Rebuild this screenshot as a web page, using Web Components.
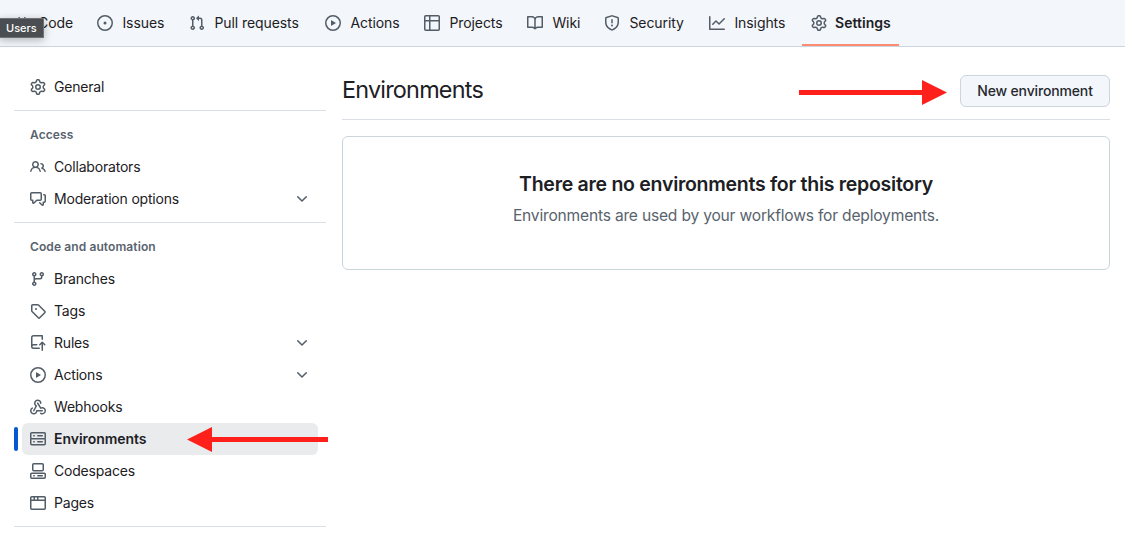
<!DOCTYPE html>
<html lang="en">
<head>
<meta charset="utf-8">
<title>Environments</title>
<style>
body{margin:0;background:#fff;color:#1c2024;font:14px/20px Inter,"Liberation Sans",sans-serif;height:533px;overflow:hidden}
</style>
</head>
<body>
<settings-page></settings-page>
<script>
const ICONS={
code:'m11.28 3.22 4.25 4.25a.75.75 0 0 1 0 1.06l-4.25 4.25a.75.75 0 0 1-1.06-1.06L13.94 8l-3.72-3.72a.75.75 0 0 1 1.06-1.06Zm-6.56 0a.75.75 0 0 1 1.06 1.06L2.06 8l3.72 3.72a.75.75 0 0 1-1.06 1.06L.47 8.53a.75.75 0 0 1 0-1.06Z',
issue:'M8 9.5a1.5 1.5 0 1 0 0-3 1.5 1.5 0 0 0 0 3ZM8 0a8 8 0 1 1 0 16A8 8 0 0 1 8 0ZM1.5 8a6.5 6.5 0 1 0 13 0 6.5 6.5 0 0 0-13 0Z',
pull:'M1.5 3.25a2.25 2.25 0 1 1 3 2.122v5.256a2.251 2.251 0 1 1-1.5 0V5.372A2.25 2.25 0 0 1 1.5 3.25Zm5.677-.177L9.573.677A.25.25 0 0 1 10 .854V2.5h1A2.5 2.5 0 0 1 13.5 5v5.628a2.251 2.251 0 1 1-1.5 0V5a1 1 0 0 0-1-1h-1v1.646a.25.25 0 0 1-.427.177L7.177 3.427a.25.25 0 0 1 0-.354ZM3.75 2.5a.75.75 0 1 0 0 1.5.75.75 0 0 0 0-1.5Zm0 9.5a.75.75 0 1 0 0 1.5.75.75 0 0 0 0-1.5Zm8.25.75a.75.75 0 1 0 1.5 0 .75.75 0 0 0-1.5 0Z',
play:'M8 0a8 8 0 1 1 0 16A8 8 0 0 1 8 0ZM1.5 8a6.5 6.5 0 1 0 13 0 6.5 6.5 0 0 0-13 0Zm4.879-2.773 4.264 2.559a.25.25 0 0 1 0 .428l-4.264 2.559A.25.25 0 0 1 6 10.559V5.442a.25.25 0 0 1 .379-.215Z',
table:'M0 1.75C0 .784.784 0 1.75 0h12.5C15.216 0 16 .784 16 1.75v12.5A1.75 1.75 0 0 1 14.25 16H1.75A1.75 1.75 0 0 1 0 14.25ZM6.5 6.5v8h7.75a.25.25 0 0 0 .25-.25V6.5Zm8-1.5V1.75a.25.25 0 0 0-.25-.25H6.5V5Zm-13 1.5v7.75c0 .138.112.25.25.25H5v-8ZM5 5V1.5H1.75a.25.25 0 0 0-.25.25V5Z',
book:'M0 1.75A.75.75 0 0 1 .75 1h4.253c1.227 0 2.317.59 3 1.501A3.743 3.743 0 0 1 11.006 1h4.245a.75.75 0 0 1 .75.75v10.5a.75.75 0 0 1-.75.75h-4.507a2.25 2.25 0 0 0-1.591.659l-.622.621a.75.75 0 0 1-1.06 0l-.622-.621A2.25 2.25 0 0 0 5.258 13H.75a.75.75 0 0 1-.75-.75Zm7.251 10.324.004-5.073-.002-2.253A2.25 2.25 0 0 0 5.003 2.5H1.5v9h3.757a3.75 3.75 0 0 1 1.994.574ZM8.755 4.75l-.004 7.322a3.752 3.752 0 0 1 1.992-.572H14.5v-9h-3.495a2.25 2.25 0 0 0-2.25 2.25Z',
shield:'M7.467.133a1.748 1.748 0 0 1 1.066 0l5.25 1.68A1.75 1.75 0 0 1 15 3.48V7c0 1.566-.32 3.182-1.303 4.682-.983 1.498-2.585 2.813-5.032 3.855a1.697 1.697 0 0 1-1.33 0c-2.447-1.042-4.049-2.357-5.032-3.855C1.32 10.182 1 8.566 1 7V3.48a1.75 1.75 0 0 1 1.217-1.667Zm.61 1.429a.25.25 0 0 0-.153 0l-5.25 1.68a.25.25 0 0 0-.174.238V7c0 1.358.275 2.666 1.057 3.86.784 1.194 2.121 2.34 4.366 3.297a.196.196 0 0 0 .154 0c2.245-.956 3.582-2.104 4.366-3.298C13.225 9.666 13.5 8.36 13.5 7V3.48a.251.251 0 0 0-.174-.237l-5.25-1.68ZM8.75 4.75v3a.75.75 0 0 1-1.5 0v-3a.75.75 0 0 1 1.5 0ZM9 10.5a1 1 0 1 1-2 0 1 1 0 0 1 2 0Z',
graph:'M1.5 1.75V13.5h13.75a.75.75 0 0 1 0 1.5H.75a.75.75 0 0 1-.75-.75V1.75a.75.75 0 0 1 1.5 0Zm14.28 2.53-5.25 5.25a.75.75 0 0 1-1.06 0L7 7.06 4.28 9.78a.751.751 0 0 1-1.042-.018.751.751 0 0 1-.018-1.042l3.25-3.25a.75.75 0 0 1 1.06 0L10 7.94l4.72-4.72a.751.751 0 0 1 1.042.018.751.751 0 0 1 .018 1.042Z',
gear:'M8 0a8.2 8.2 0 0 1 .701.031C9.444.095 9.99.645 10.16 1.29l.288 1.107c.018.066.079.158.212.224.231.114.454.243.668.386.123.082.233.09.299.071l1.103-.303c.644-.176 1.392.021 1.82.63.27.385.506.792.704 1.218.315.675.111 1.422-.364 1.891l-.814.806c-.049.048-.098.147-.088.294.016.257.016.515 0 .772-.01.147.038.246.088.294l.814.806c.475.469.679 1.216.364 1.891a7.977 7.977 0 0 1-.704 1.217c-.428.61-1.176.807-1.82.63l-1.102-.302c-.067-.019-.177-.011-.3.071a5.909 5.909 0 0 1-.668.386c-.133.066-.194.158-.211.224l-.29 1.106c-.168.646-.715 1.196-1.458 1.26a8.006 8.006 0 0 1-1.402 0c-.743-.064-1.289-.614-1.458-1.26l-.289-1.106c-.018-.066-.079-.158-.212-.224a5.738 5.738 0 0 1-.668-.386c-.123-.082-.233-.09-.299-.071l-1.103.303c-.644.176-1.392-.021-1.82-.63a8.12 8.12 0 0 1-.704-1.218c-.315-.675-.111-1.422.363-1.891l.815-.806c.05-.048.098-.147.088-.294a6.214 6.214 0 0 1 0-.772c.01-.147-.038-.246-.088-.294l-.815-.806C.635 6.045.431 5.298.746 4.623a7.92 7.92 0 0 1 .704-1.217c.428-.61 1.176-.807 1.82-.63l1.102.302c.067.019.177.011.3-.071.214-.143.437-.272.668-.386.133-.066.194-.158.211-.224l.29-1.106C6.009.645 6.556.095 7.299.03 7.53.01 7.764 0 8 0Zm-.571 1.525c-.036.003-.108.036-.137.146l-.289 1.105c-.147.561-.549.967-.998 1.189-.173.086-.34.183-.5.29-.417.278-.97.423-1.529.27l-1.103-.303c-.109-.03-.175.016-.195.045-.22.312-.412.644-.573.99-.014.031-.021.11.059.19l.815.806c.411.406.562.957.53 1.456a4.709 4.709 0 0 0 0 .582c.032.499-.119 1.05-.53 1.456l-.815.806c-.081.08-.073.159-.059.19.162.346.353.677.573.989.02.03.085.076.195.046l1.102-.303c.56-.153 1.113-.008 1.53.27.161.107.328.204.501.29.447.222.85.629.997 1.189l.289 1.105c.029.109.101.143.137.146a6.6 6.6 0 0 0 1.142 0c.036-.003.108-.036.137-.146l.289-1.105c.147-.561.549-.967.998-1.189.173-.086.34-.183.5-.29.417-.278.97-.423 1.529-.27l1.103.303c.109.029.175-.016.195-.045.22-.313.411-.644.573-.99.014-.031.021-.11-.059-.19l-.815-.806c-.411-.406-.562-.957-.53-1.456a4.709 4.709 0 0 0 0-.582c-.032-.499.119-1.05.53-1.456l.815-.806c.081-.08.073-.159.059-.19a6.464 6.464 0 0 0-.573-.989c-.02-.03-.085-.076-.195-.046l-1.102.303c-.56.153-1.113.008-1.53-.27a4.44 4.44 0 0 0-.501-.29c-.447-.222-.85-.629-.997-1.189l-.289-1.105c-.029-.11-.101-.143-.137-.146a6.6 6.6 0 0 0-1.142 0ZM11 8a3 3 0 1 1-6 0 3 3 0 0 1 6 0ZM9.5 8a1.5 1.5 0 1 0-3.001.001A1.5 1.5 0 0 0 9.5 8Z',
people:'M2 5.5a3.5 3.5 0 1 1 5.898 2.549 5.508 5.508 0 0 1 3.034 4.084.75.75 0 1 1-1.482.235 4 4 0 0 0-7.9 0 .75.75 0 0 1-1.482-.236A5.507 5.507 0 0 1 3.102 8.05 3.493 3.493 0 0 1 2 5.5ZM11 4a3.001 3.001 0 0 1 2.22 5.018 5.01 5.01 0 0 1 2.56 3.012.749.749 0 0 1-.885.954.752.752 0 0 1-.549-.514 3.507 3.507 0 0 0-2.522-2.372.75.75 0 0 1-.574-.73v-.352a.75.75 0 0 1 .416-.672A1.5 1.5 0 0 0 11 5.5.75.75 0 0 1 11 4Zm-5.5-.5a2 2 0 1 0-.001 3.999A2 2 0 0 0 5.5 3.5Z',
discussion:'M1.75 1h8.5c.966 0 1.75.784 1.75 1.75v5.5A1.75 1.75 0 0 1 10.25 10H7.061l-2.574 2.573A1.458 1.458 0 0 1 2 11.543V10h-.25A1.75 1.75 0 0 1 0 8.25v-5.5C0 1.784.784 1 1.75 1ZM1.5 2.75v5.5c0 .138.112.25.25.25h1a.75.75 0 0 1 .75.75v2.19l2.72-2.72a.749.749 0 0 1 .53-.22h3.5a.25.25 0 0 0 .25-.25v-5.5a.25.25 0 0 0-.25-.25h-8.5a.25.25 0 0 0-.25.25Zm13 2a.25.25 0 0 0-.25-.25h-.5a.75.75 0 0 1 0-1.5h.5c.966 0 1.75.784 1.75 1.75v5.5A1.75 1.75 0 0 1 14.25 12H14v1.543a1.458 1.458 0 0 1-2.487 1.03L9.22 12.28a.749.749 0 0 1 .326-1.275.749.749 0 0 1 .734.215l2.22 2.22v-2.19a.75.75 0 0 1 .75-.75h1a.25.25 0 0 0 .25-.25Z',
branch:'M9.5 3.25a2.25 2.25 0 1 1 3 2.122V6A2.5 2.5 0 0 1 10 8.5H6a1 1 0 0 0-1 1v1.128a2.251 2.251 0 1 1-1.5 0V5.372a2.25 2.25 0 1 1 1.5 0v1.836A2.493 2.493 0 0 1 6 7h4a1 1 0 0 0 1-1v-.628A2.25 2.25 0 0 1 9.5 3.25Zm-6 0a.75.75 0 1 0 1.5 0 .75.75 0 0 0-1.5 0Zm8.25-.75a.75.75 0 1 0 0 1.5.75.75 0 0 0 0-1.5ZM4.25 12a.75.75 0 1 0 0 1.5.75.75 0 0 0 0-1.5Z',
tag:'M1 7.775V2.75C1 1.784 1.784 1 2.75 1h5.025c.464 0 .91.184 1.238.513l6.25 6.25a1.75 1.75 0 0 1 0 2.474l-5.026 5.026a1.75 1.75 0 0 1-2.474 0l-6.25-6.25A1.752 1.752 0 0 1 1 7.775Zm1.5 0c0 .066.026.13.073.177l6.25 6.25a.25.25 0 0 0 .354 0l5.025-5.025a.25.25 0 0 0 0-.354l-6.25-6.25a.25.25 0 0 0-.177-.073H2.75a.25.25 0 0 0-.25.25ZM6 5a1 1 0 1 1 0 2 1 1 0 0 1 0-2Z',
push:'M1 2.5A2.5 2.5 0 0 1 3.5 0h8.75a.75.75 0 0 1 .75.75v3.5a.75.75 0 0 1-1.5 0V1.5h-8a1 1 0 0 0-1 1v6.708A2.493 2.493 0 0 1 3.5 9h3.25a.75.75 0 0 1 0 1.5H3.5a1 1 0 0 0 0 2h5.75a.75.75 0 0 1 0 1.5H3.5A2.5 2.5 0 0 1 1 11.5Zm13.23 7.79-1.23-1.224v6.184a.75.75 0 0 1-1.5 0V9.066l-1.22 1.224a.75.75 0 0 1-1.06-1.06l2.5-2.5a.75.75 0 0 1 1.06 0l2.5 2.5a.75.75 0 0 1-1.05 1.06Z',
webhook:'M5.5 4.25a2.25 2.25 0 0 1 4.5 0 .75.75 0 0 0 1.5 0 3.75 3.75 0 1 0-6.14 2.889l-2.272 4.258a.75.75 0 0 0 1.324.706L7 7.25a.75.75 0 0 0-.309-1.015A2.25 2.25 0 0 1 5.5 4.25Z M7.364 3.607a.75.75 0 0 1 1.03.257l2.608 4.349a3.75 3.75 0 1 1-.628 6.785.75.75 0 0 1 .752-1.299 2.25 2.25 0 1 0-.033-3.88.75.75 0 0 1-1.03-.256L7.107 4.636a.75.75 0 0 1 .257-1.03Z M2.9 8.776A.75.75 0 0 1 2.625 9.8 2.25 2.25 0 1 0 6 11.75a.75.75 0 0 1 .75-.751h5.5a.75.75 0 0 1 0 1.5H7.425a3.751 3.751 0 1 1-5.55-3.998.75.75 0 0 1 1.024.274Z',
server:'M1.75 1h12.5c.966 0 1.75.784 1.75 1.75v4c0 .372-.116.717-.314 1 .198.283.314.628.314 1v4a1.75 1.75 0 0 1-1.75 1.75H1.75A1.75 1.75 0 0 1 0 12.75v-4c0-.358.109-.707.314-1a1.739 1.739 0 0 1-.314-1v-4C0 1.784.784 1 1.75 1ZM1.5 2.75v4c0 .138.112.25.25.25h12.5a.25.25 0 0 0 .25-.25v-4a.25.25 0 0 0-.25-.25H1.75a.25.25 0 0 0-.25.25Zm.25 5.75a.25.25 0 0 0-.25.25v4c0 .138.112.25.25.25h12.5a.25.25 0 0 0 .25-.25v-4a.25.25 0 0 0-.25-.25ZM7 4.75A.75.75 0 0 1 7.75 4h4.5a.75.75 0 0 1 0 1.5h-4.5A.75.75 0 0 1 7 4.75ZM7.75 10h4.5a.75.75 0 0 1 0 1.5h-4.5a.75.75 0 0 1 0-1.5ZM3 4.75A.75.75 0 0 1 3.75 4h.5a.75.75 0 0 1 0 1.5h-.5A.75.75 0 0 1 3 4.75ZM3.75 10h.5a.75.75 0 0 1 0 1.5h-.5a.75.75 0 0 1 0-1.5Z',
codespaces:'M0 11.25c0-.966.784-1.75 1.75-1.75h12.5c.966 0 1.75.784 1.75 1.75v3A1.75 1.75 0 0 1 14.25 16H1.75A1.75 1.75 0 0 1 0 14.25Zm2-9.5C2 .784 2.784 0 3.75 0h8.5C13.216 0 14 .784 14 1.75v5a1.75 1.75 0 0 1-1.75 1.75h-8.5A1.75 1.75 0 0 1 2 6.75Zm1.75-.25a.25.25 0 0 0-.25.25v5c0 .138.112.25.25.25h8.5a.25.25 0 0 0 .25-.25v-5a.25.25 0 0 0-.25-.25Zm-2 9.5a.25.25 0 0 0-.25.25v3c0 .138.112.25.25.25h12.5a.25.25 0 0 0 .25-.25v-3a.25.25 0 0 0-.25-.25ZM7 12.75a.75.75 0 0 1 .75-.75h4.5a.75.75 0 0 1 0 1.5h-4.5a.75.75 0 0 1-.75-.75Zm-4 0a.75.75 0 0 1 .75-.75h.5a.75.75 0 0 1 0 1.5h-.5a.75.75 0 0 1-.75-.75Z',
browser:'M0 2.75C0 1.784.784 1 1.75 1h12.5c.966 0 1.75.784 1.75 1.75v10.5A1.75 1.75 0 0 1 14.25 15H1.75A1.75 1.75 0 0 1 0 13.25ZM14.5 6h-13v7.25c0 .138.112.25.25.25h12.5a.25.25 0 0 0 .25-.25Zm-6-3.5v2h6V2.75a.25.25 0 0 0-.25-.25ZM5 2.5v2h2v-2Zm-3.25 0a.25.25 0 0 0-.25.25V4.5h2v-2Z',
chevron:'M12.78 5.22a.749.749 0 0 1 0 1.06l-4.25 4.25a.749.749 0 0 1-1.06 0L3.22 6.28a.749.749 0 1 1 1.06-1.06L8 8.939l3.72-3.719a.749.749 0 0 1 1.06 0Z'
};
function define(name,render){
  customElements.define(name,class extends HTMLElement{
    constructor(){super();this.attachShadow({mode:'open'})}
    connectedCallback(){this.shadowRoot.innerHTML=render(this)}
  });
}
define('oct-icon',el=>`<style>:host{display:block;flex:none;width:16px;height:16px;color:#535d68}svg{display:block}</style>
<svg width="16" height="16" viewBox="0 0 16 16" fill="currentColor"><path fill-rule="${el.getAttribute('name')==='webhook'?'nonzero':'evenodd'}" d="${ICONS[el.getAttribute('name')]}"/></svg>`);

define('nav-tab',el=>`<style>
:host{display:flex;flex:none;box-sizing:border-box;height:46px;align-items:center;gap:8px;padding:0 0 0 8px;white-space:nowrap;position:relative;letter-spacing:-.08px}
:host([current]){font-weight:600;letter-spacing:.04px}
:host([current])::after{content:"";position:absolute;left:-1px;right:0;bottom:0;height:2px;background:#fd8c73}
span{padding-left:1.4px}
:host([current]) span{padding-left:0}
:host([icon=code]) span{padding-left:0}
:host([icon=code]) oct-icon{margin-bottom:2px}
</style><oct-icon name="${el.getAttribute('icon')}"></oct-icon><span><slot></slot></span>`);

define('repo-nav',()=>`<style>
:host{display:flex;height:46px;background:#f3f6fa;border-bottom:1px solid #ccd5de;padding-left:6px}
</style><slot></slot>`);

define('nav-item',el=>`<style>
:host{display:flex;box-sizing:border-box;height:32px;margin:0 8px;padding:0 8px;align-items:center;gap:8px;border-radius:6px;position:relative;white-space:nowrap;letter-spacing:-.19px}
:host([current]){background:#eaebed;font-weight:600;letter-spacing:-.05px}
:host([current])::before{content:"";position:absolute;left:-8px;top:4px;width:4px;height:24px;border-radius:2px;background:#0757d0}
.label{flex:1}
</style><oct-icon name="${el.getAttribute('icon')}"></oct-icon><span class="label"><slot></slot></span>${el.hasAttribute('expandable')?'<oct-icon name="chevron"></oct-icon>':''}`);

define('nav-group',el=>`<style>
:host{display:block;border-bottom:1px solid #d9dfe5;padding:7px 0}
h3{margin:0;padding:8px 16px 7px;font-size:12px;line-height:18px;font-weight:600;color:#59636e;letter-spacing:.1px}
</style>${el.getAttribute('heading')?`<h3>${el.getAttribute('heading')}</h3>`:''}<slot></slot>`);

define('action-button',()=>`<style>
:host{display:block}
button{display:block;box-sizing:border-box;width:150px;height:32px;padding:0;border:1px solid #cbd5dc;border-radius:6px;background:#f3f6fa;color:#25292e;font:500 14px/20px Inter,sans-serif;letter-spacing:-.15px;white-space:nowrap}
</style><button><slot></slot></button>`);

define('blank-slate',()=>`<style>
:host{display:block;box-sizing:border-box;height:134px;border:1px solid #cbd5dc;border-radius:6px;padding-top:32px;text-align:center}
h2{margin:0;font-size:19.5px;line-height:30px;font-weight:600;letter-spacing:-.27px}
p{margin:5px 0 0;font-size:15.6px;line-height:24px;color:#59636e;letter-spacing:-.2px}
</style><h2><slot name="title"></slot></h2><p><slot></slot></p>`);

define('red-arrow',el=>`<style>
:host{display:block;position:absolute}
svg{display:block}:host([left]) svg{transform:scaleX(-1)}
</style><svg width="${el.getAttribute('length')}" height="25"><path fill="#ff201b" d="M0 10H${el.getAttribute('length')-25}V0L${el.getAttribute('length')} 12.5L${el.getAttribute('length')-25} 25V15H0Z"/></svg>`);

define('hover-tip',()=>`<style>
:host{display:block;position:absolute;left:-1px;top:18px;box-sizing:border-box;width:45px;height:20px;padding-left:6px;background:#4b4e50;border:1px solid #707375;color:#fff;font-size:11px;line-height:18px;font-weight:500;box-shadow:0 2px 8px rgba(0,0,0,.28)}
</style><slot></slot>`);

define('settings-page',()=>`<style>
:host{display:block;position:relative;height:533px;overflow:hidden}
.body{display:grid;grid-template-columns:312px 768px;column-gap:16px;padding-left:14px}
aside{padding-top:17px}
main{padding-top:28px}
header{display:flex;justify-content:space-between;height:44px;border-bottom:1px solid #d9dfe5;margin-bottom:16px}
h1{margin:0;font-size:23.4px;font-weight:400;line-height:30px;letter-spacing:-.78px}
</style>
<repo-nav>
<nav-tab icon="code" style="width:83px">Code</nav-tab>
<nav-tab icon="issue" style="width:92px">Issues</nav-tab>
<nav-tab icon="pull" style="width:136px">Pull requests</nav-tab>
<nav-tab icon="play" style="width:99px">Actions</nav-tab>
<nav-tab icon="table" style="width:103px">Projects</nav-tab>
<nav-tab icon="book" style="width:77px">Wiki</nav-tab>
<nav-tab icon="shield" style="width:105px">Security</nav-tab>
<nav-tab icon="graph" style="width:102px">Insights</nav-tab>
<nav-tab icon="gear" current style="width:96px">Settings</nav-tab>
</repo-nav>
<div class="body">
<aside>
<nav-group><nav-item icon="gear">General</nav-item></nav-group>
<nav-group heading="Access">
<nav-item icon="people">Collaborators</nav-item>
<nav-item icon="discussion" expandable>Moderation options</nav-item>
</nav-group>
<nav-group heading="Code and automation">
<nav-item icon="branch">Branches</nav-item>
<nav-item icon="tag">Tags</nav-item>
<nav-item icon="push" expandable>Rules</nav-item>
<nav-item icon="play" expandable>Actions</nav-item>
<nav-item icon="webhook">Webhooks</nav-item>
<nav-item icon="server" current>Environments</nav-item>
<nav-item icon="codespaces">Codespaces</nav-item>
<nav-item icon="browser">Pages</nav-item>
</nav-group>
</aside>
<main>
<header><h1>Environments</h1><action-button>New environment</action-button></header>
<blank-slate><span slot="title">There are no environments for this repository</span>Environments are used by your workflows for deployments.</blank-slate>
</main>
</div>
<red-arrow length="148" style="left:799px;top:80px"></red-arrow>
<red-arrow left length="141" style="left:187px;top:427px"></red-arrow>
<hover-tip>Users</hover-tip>`);
</script>
</body>
</html>
